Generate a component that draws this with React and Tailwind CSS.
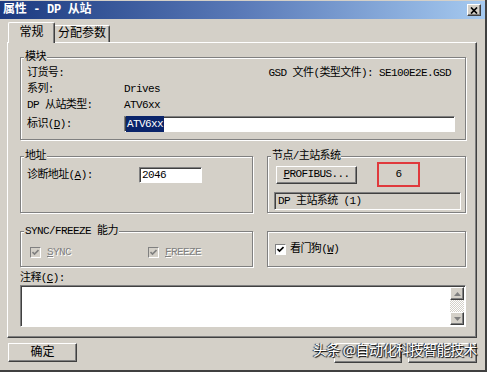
const font = "font-['Liberation_Mono','Noto_Sans_CJK_SC',monospace] tracking-[-0.6px]"

function Raised({ className = '', children }) {
    return (
        <div
            className={`flex items-center justify-center border border-t-white border-l-white border-r-[#404040] border-b-[#404040] bg-[#d4d0c8] shadow-[inset_-1px_-1px_0_#808080] ${className}`}
        >
            {children}
        </div>
    )
}

function Sunken({ className = '', children }) {
    return (
        <div
            className={`flex items-center border border-t-[#808080] border-l-[#808080] border-r-white border-b-white shadow-[inset_1px_1px_0_#404040] ${className}`}
        >
            {children}
        </div>
    )
}

function Group({ label, className = '', children }) {
    return (
        <div className={`relative border border-[#808080] shadow-[1px_1px_0_#fff,inset_1px_1px_0_#fff] ${className}`}>
            {label && (
                <span className="absolute -top-[8px] left-[3px] bg-[#d4d0c8] px-px text-[11px] leading-[14px] text-black">
                    {label}
                </span>
            )}
            {children}
        </div>
    )
}

function Check({ disabled }) {
    return (
        <span
            className={`flex h-[11px] w-[11px] items-center justify-center border border-t-[#808080] border-l-[#808080] border-r-white border-b-white ${disabled ? 'bg-[#d4d0c8]' : 'bg-white'}`}
        >
            <svg width="7" height="7" viewBox="0 0 7 7">
                <path d="M0.5 3 L2.5 5 L6.5 1" fill="none" stroke={disabled ? '#808080' : '#000'} strokeWidth="1.6" />
            </svg>
        </span>
    )
}

export default function App() {
    return (
        <div className={`relative flex h-[372px] w-[487px] flex-col overflow-hidden border-r-2 border-b-2 border-r-[#404040] border-b-[#404040] bg-[#d4d0c8] pt-px text-black ${font}`}>
            <div className="flex h-[18px] items-center justify-between bg-gradient-to-r from-[#1c3a80] via-[#5a7ab8] to-[#a6caf0] pl-[3px] pr-[4px]">
                <span className="text-[12px] font-bold text-white tracking-[-0.3px]">属性 - DP 从站</span>
                <Raised className="h-[12px] w-[14px]">
                    <svg width="8" height="7" viewBox="0 0 8 7">
                        <path d="M1 0.5 L7 6.5 M7 0.5 L1 6.5" stroke="#000" strokeWidth="1.7" />
                    </svg>
                </Raised>
            </div>

            <div className="relative z-10 mt-[3px] flex h-[20px] items-end pl-[8px] text-[12px] tracking-normal">
                <div className="-mb-px flex h-[21px] w-[47px] items-center justify-center rounded-t-[2px] border-t border-l border-r border-t-white border-l-white border-r-[#404040] bg-[#d4d0c8] shadow-[inset_-1px_0_0_#808080]">
                    常规
                </div>
                <div className="flex h-[17px] w-[55px] items-center justify-center rounded-tr-[2px] border-t border-r border-t-white border-r-[#404040] shadow-[inset_-1px_0_0_#808080]">
                    分配参数
                </div>
            </div>

            <div className="ml-[7px] flex h-[296px] w-[470px] flex-col border border-t-white border-l-white border-r-[#404040] border-b-[#404040] pl-[12px] shadow-[inset_-1px_-1px_0_#808080] text-[11px]">
                <Group label="模块" className="mt-[14px] h-[83px] w-[446px] pl-[6px] pt-[7px]">
                    <div className="flex h-[16px] items-center justify-between pr-[14px]">
                        <span>订货号:</span>
                        <span>GSD 文件(类型文件): SE100E2E.GSD</span>
                    </div>
                    <div className="flex h-[16px] items-center">
                        <span className="w-[97px]">系列:</span>
                        <span>Drives</span>
                    </div>
                    <div className="flex h-[16px] items-center">
                        <span className="w-[97px]">DP 从站类型:</span>
                        <span>ATV6xx</span>
                    </div>
                    <div className="mt-[3px] flex h-[16px] items-center">
                        <span className="w-[97px]">标识(<span className="underline">D</span>):</span>
                        <Sunken className="h-[16px] w-[331px] bg-white pl-px">
                            <span className="bg-[#0a246a] px-px text-white">ATV6xx</span>
                        </Sunken>
                    </div>
                </Group>

                <div className="mt-[16px] flex gap-[14px]">
                    <Group label="地址" className="h-[57px] w-[233px] pl-[6px] pt-[10px]">
                        <div className="flex h-[16px] items-center">
                            <span className="w-[112px]">诊断地址(<span className="underline">A</span>):</span>
                            <Sunken className="h-[16px] w-[63px] bg-white pl-[2px]">2046</Sunken>
                        </div>
                    </Group>
                    <Group label="节点/主站系统" className="h-[57px] w-[199px] pl-[6px] pt-[5px]">
                        <div className="flex items-center">
                            <Raised className="ml-[2px] h-[18px] w-[81px]">
                                <span><span className="underline">P</span>ROFIBUS...</span>
                            </Raised>
                            <div className="ml-[20px] flex h-[25px] w-[43px] items-center justify-center border-2 border-[#e0393c]">
                                6
                            </div>
                        </div>
                        <Sunken className="mt-[5px] h-[18px] w-[187px] pl-[3px]">DP 主站系统 (1)</Sunken>
                    </Group>
                </div>

                <div className="mt-[18px] flex gap-[14px]">
                    <Group label="SYNC/FREEZE 能力" className="flex h-[36px] w-[233px] items-center pl-[9px] pt-[7px]">
                        <Check disabled />
                        <span className="ml-[6px] w-[101px] text-[#808080] [text-shadow:1px_1px_0_#fff]">
                            <span className="underline">S</span>YNC
                        </span>
                        <Check disabled />
                        <span className="ml-[6px] text-[#808080] [text-shadow:1px_1px_0_#fff]">
                            <span className="underline">F</span>REEZE
                        </span>
                    </Group>
                    <Group className="flex h-[36px] w-[199px] items-center pl-[7px] pt-px">
                        <Check />
                        <span className="ml-[4px]">看门狗(<span className="underline">W</span>)</span>
                    </Group>
                </div>

                <div className="mt-[4px] flex h-[14px] items-center">
                    注释(<span className="underline">C</span>):
                </div>
                <Sunken className="h-[42px] w-[446px] items-stretch justify-end bg-white pr-px py-px">
                    <div className="flex w-[14px] flex-col justify-between bg-[repeating-conic-gradient(#fff_0_25%,#d4d0c8_0_50%)] bg-[length:2px_2px]">
                        <Raised className="h-[13px] w-[14px]">
                            <svg width="7" height="4" viewBox="0 0 7 4"><path d="M0 4 L3.5 0 L7 4 Z" fill="#808080" /></svg>
                        </Raised>
                        <Raised className="h-[13px] w-[14px]">
                            <svg width="7" height="4" viewBox="0 0 7 4"><path d="M0 0 L3.5 4 L7 0 Z" fill="#808080" /></svg>
                        </Raised>
                    </div>
                </Sunken>
            </div>

            <div className="mt-[5px] flex h-[19px] text-[12px] tracking-normal">
                <Raised className="ml-[8px] h-[19px] w-[69px]">确定</Raised>
                <Raised className="ml-[257px] h-[20px] w-[68px]" />
                <Raised className="ml-[6px] h-[20px] w-[69px]" />
            </div>

            <span className="absolute bottom-[10px] right-[8px] text-[14px] tracking-[-0.5px] font-['Noto_Sans_CJK_SC',sans-serif] text-white [text-shadow:1px_1px_1px_#000,-1px_0_1px_#000]">
                头条 @自动化科技智能技术
            </span>
        </div>
    )
}
